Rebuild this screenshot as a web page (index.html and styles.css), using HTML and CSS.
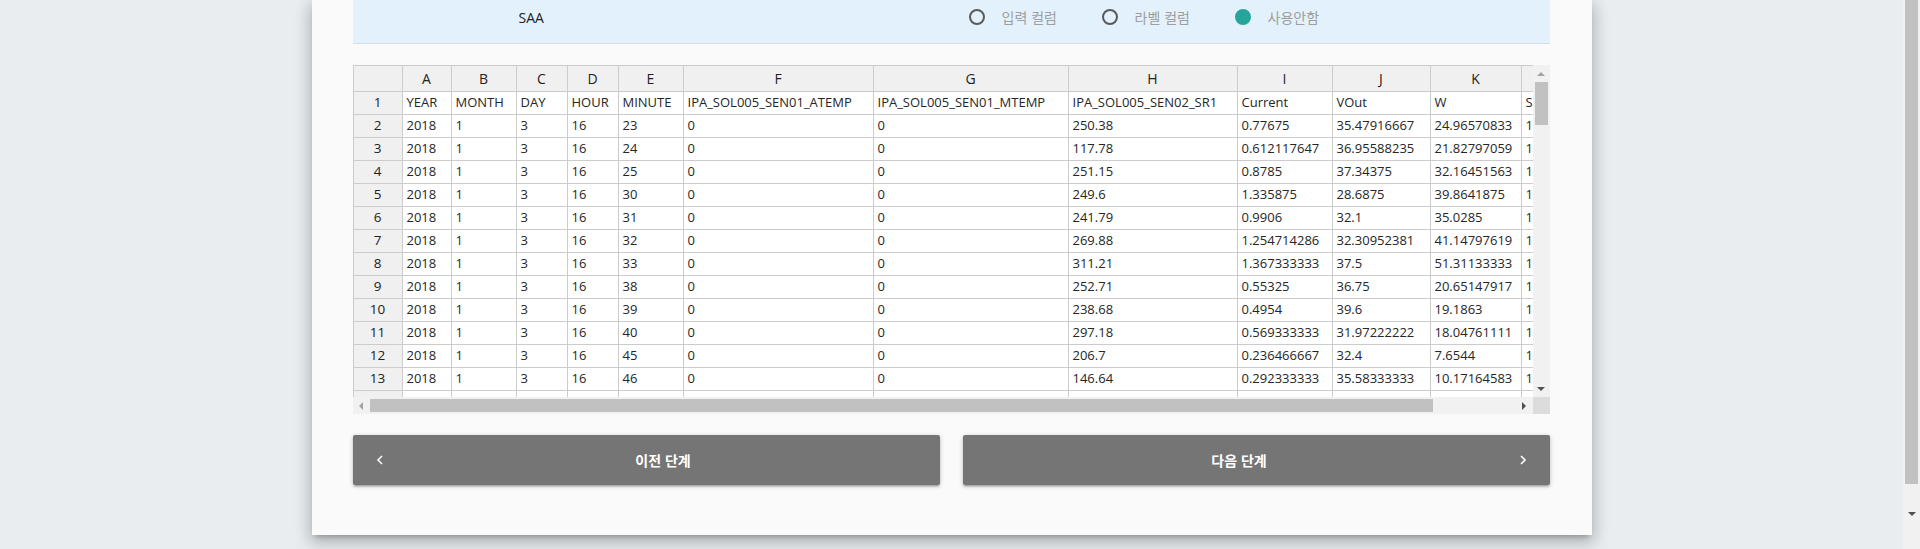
FILE: index.html
```html
<!DOCTYPE html>
<html lang="ko">
<head>
<meta charset="utf-8">
<title>데이터 컬럼 설정</title>
<link rel="stylesheet" href="styles.css">
</head>
<body>
<div class="screen">
  <main class="page">
    <section class="card">
      <div class="col-row">
        <span class="col-name">SAA</span>
        <div class="radios">
          <label class="radio"><span class="dot"></span><span class="radio-label">입력 컬럼</span></label>
          <label class="radio"><span class="dot"></span><span class="radio-label">라벨 컬럼</span></label>
          <label class="radio"><span class="dot checked"></span><span class="radio-label">사용안함</span></label>
        </div>
      </div>

      <div class="grid-frame">
        <div class="viewport">
          <div class="sheet">
            <div class="row head">
              <div class="c h"></div><div class="c h">A</div><div class="c h">B</div><div class="c h">C</div><div class="c h">D</div><div class="c h">E</div><div class="c h">F</div><div class="c h">G</div><div class="c h">H</div><div class="c h">I</div><div class="c h">J</div><div class="c h">K</div><div class="c h">L</div>
            </div>
            <div class="row">
              <div class="c rh">1</div><div class="c">YEAR</div><div class="c">MONTH</div><div class="c">DAY</div><div class="c">HOUR</div><div class="c">MINUTE</div><div class="c">IPA_SOL005_SEN01_ATEMP</div><div class="c">IPA_SOL005_SEN01_MTEMP</div><div class="c">IPA_SOL005_SEN02_SR1</div><div class="c">Current</div><div class="c">VOut</div><div class="c">W</div><div class="c">SR</div>
            </div>
            <div class="row">
              <div class="c rh">2</div><div class="c">2018</div><div class="c">1</div><div class="c">3</div><div class="c">16</div><div class="c">23</div><div class="c">0</div><div class="c">0</div><div class="c">250.38</div><div class="c">0.77675</div><div class="c">35.47916667</div><div class="c">24.96570833</div><div class="c">1</div>
            </div>
            <div class="row">
              <div class="c rh">3</div><div class="c">2018</div><div class="c">1</div><div class="c">3</div><div class="c">16</div><div class="c">24</div><div class="c">0</div><div class="c">0</div><div class="c">117.78</div><div class="c">0.612117647</div><div class="c">36.95588235</div><div class="c">21.82797059</div><div class="c">1</div>
            </div>
            <div class="row">
              <div class="c rh">4</div><div class="c">2018</div><div class="c">1</div><div class="c">3</div><div class="c">16</div><div class="c">25</div><div class="c">0</div><div class="c">0</div><div class="c">251.15</div><div class="c">0.8785</div><div class="c">37.34375</div><div class="c">32.16451563</div><div class="c">1</div>
            </div>
            <div class="row">
              <div class="c rh">5</div><div class="c">2018</div><div class="c">1</div><div class="c">3</div><div class="c">16</div><div class="c">30</div><div class="c">0</div><div class="c">0</div><div class="c">249.6</div><div class="c">1.335875</div><div class="c">28.6875</div><div class="c">39.8641875</div><div class="c">1</div>
            </div>
            <div class="row">
              <div class="c rh">6</div><div class="c">2018</div><div class="c">1</div><div class="c">3</div><div class="c">16</div><div class="c">31</div><div class="c">0</div><div class="c">0</div><div class="c">241.79</div><div class="c">0.9906</div><div class="c">32.1</div><div class="c">35.0285</div><div class="c">1</div>
            </div>
            <div class="row">
              <div class="c rh">7</div><div class="c">2018</div><div class="c">1</div><div class="c">3</div><div class="c">16</div><div class="c">32</div><div class="c">0</div><div class="c">0</div><div class="c">269.88</div><div class="c">1.254714286</div><div class="c">32.30952381</div><div class="c">41.14797619</div><div class="c">1</div>
            </div>
            <div class="row">
              <div class="c rh">8</div><div class="c">2018</div><div class="c">1</div><div class="c">3</div><div class="c">16</div><div class="c">33</div><div class="c">0</div><div class="c">0</div><div class="c">311.21</div><div class="c">1.367333333</div><div class="c">37.5</div><div class="c">51.31133333</div><div class="c">1</div>
            </div>
            <div class="row">
              <div class="c rh">9</div><div class="c">2018</div><div class="c">1</div><div class="c">3</div><div class="c">16</div><div class="c">38</div><div class="c">0</div><div class="c">0</div><div class="c">252.71</div><div class="c">0.55325</div><div class="c">36.75</div><div class="c">20.65147917</div><div class="c">1</div>
            </div>
            <div class="row">
              <div class="c rh">10</div><div class="c">2018</div><div class="c">1</div><div class="c">3</div><div class="c">16</div><div class="c">39</div><div class="c">0</div><div class="c">0</div><div class="c">238.68</div><div class="c">0.4954</div><div class="c">39.6</div><div class="c">19.1863</div><div class="c">1</div>
            </div>
            <div class="row">
              <div class="c rh">11</div><div class="c">2018</div><div class="c">1</div><div class="c">3</div><div class="c">16</div><div class="c">40</div><div class="c">0</div><div class="c">0</div><div class="c">297.18</div><div class="c">0.569333333</div><div class="c">31.97222222</div><div class="c">18.04761111</div><div class="c">1</div>
            </div>
            <div class="row">
              <div class="c rh">12</div><div class="c">2018</div><div class="c">1</div><div class="c">3</div><div class="c">16</div><div class="c">45</div><div class="c">0</div><div class="c">0</div><div class="c">206.7</div><div class="c">0.236466667</div><div class="c">32.4</div><div class="c">7.6544</div><div class="c">1</div>
            </div>
            <div class="row">
              <div class="c rh">13</div><div class="c">2018</div><div class="c">1</div><div class="c">3</div><div class="c">16</div><div class="c">46</div><div class="c">0</div><div class="c">0</div><div class="c">146.64</div><div class="c">0.292333333</div><div class="c">35.58333333</div><div class="c">10.17164583</div><div class="c">1</div>
            </div>
            <div class="row">
              <div class="c rh">14</div><div class="c">2018</div><div class="c">1</div><div class="c">3</div><div class="c">16</div><div class="c">47</div><div class="c">0</div><div class="c">0</div><div class="c">164.58</div><div class="c">0.3838</div><div class="c">35.375</div><div class="c">13.2023</div><div class="c">1</div>
            </div>
          </div>
        </div>
        <div class="vscroll">
          <span class="arrow up dim"></span>
          <span class="vthumb"></span>
          <span class="vspace"></span>
          <span class="arrow down"></span>
          <span class="corner"></span>
        </div>
        <div class="hscroll">
          <span class="arrow left dim"></span>
          <span class="htrack"><span class="hthumb"></span></span>
          <span class="arrow right"></span>
        </div>
      </div>

      <div class="actions">
        <button class="btn prev" type="button">
          <svg class="chev" width="8" height="10" viewBox="0 0 8 10"><path d="M6 1 L2 5 L6 9" fill="none" stroke="#fff" stroke-width="1.6"/></svg>
          <span class="btn-text">이전 단계</span>
        </button>
        <button class="btn next" type="button">
          <span class="btn-text">다음 단계</span>
          <svg class="chev" width="8" height="10" viewBox="0 0 8 10"><path d="M2 1 L6 5 L2 9" fill="none" stroke="#fff" stroke-width="1.6"/></svg>
        </button>
      </div>
    </section>
  </main>
  <div class="page-scroll">
    <span class="page-thumb"></span>
    <span class="page-space"></span>
    <span class="arrow down dark"></span>
  </div>
</div>
</body>
</html>
```

FILE: styles.css
```css
html, body {
  margin: 0;
  height: 549px;
  overflow: hidden;
}

body {
  background: #e9edf0;
  font-family: "Open Sans", "Noto Sans", "Noto Sans CJK KR", sans-serif;
  color: #333;
}

.screen {
  display: flex;
  height: 549px;
}

.page {
  flex: 1;
  display: flex;
  justify-content: center;
  align-items: flex-start;
}

.card {
  width: 1280px;
  box-sizing: border-box;
  padding: 0 42px 50px 41px;
  background: #fafafa;
  box-shadow: 0 8px 17px 2px rgba(0, 0, 0, 0.14), 0 3px 14px 2px rgba(0, 0, 0, 0.12), 0 5px 5px -3px rgba(0, 0, 0, 0.2);
}

/* column setting row */
.col-row {
  display: flex;
  align-items: center;
  height: 44px;
  box-sizing: border-box;
  padding: 0 0 9px 166px;
  background: #e3f1fc;
  border-bottom: 1px solid #d3dee7;
}

.col-name {
  width: 450px;
  font-size: 14px;
  color: #222;
}

.radios {
  display: flex;
  align-items: center;
}

.radio {
  display: flex;
  align-items: center;
  width: 133px;
  font-family: "Noto Sans CJK KR", sans-serif;
  font-size: 14px;
  color: #9e9e9e;
}

.dot {
  width: 16px;
  height: 16px;
  box-sizing: border-box;
  border: 2px solid #5a5a5a;
  border-radius: 50%;
  margin-right: 17px;
}

.dot.checked {
  border-color: #26a69a;
  background: #26a69a;
}

/* spreadsheet */
.grid-frame {
  margin-top: 21px;
  display: grid;
  grid-template-columns: 1180px 17px;
  grid-template-rows: 332px 17px;
}

.viewport {
  overflow: hidden;
}

.sheet {
  display: grid;
  grid-template-columns: 49px 49px 65px 51px 51px 65px 190px 195px 169px 95px 98px 91px 80px;
  grid-template-rows: 26px;
  grid-auto-rows: 23px;
  width: max-content;
  border-left: 1px solid #ccc;
  border-top: 1px solid #ccc;
  background: #fff;
  font-size: 13px;
  color: #262626;
}

.row {
  display: contents;
}

.c {
  box-sizing: border-box;
  border-right: 1px solid #ccc;
  border-bottom: 1px solid #ccc;
  padding: 0 4px;
  line-height: 21px;
  white-space: nowrap;
  overflow: hidden;
}

.c.h {
  background: #f0f0f0;
  text-align: center;
  line-height: 25px;
  font-size: 14px;
  color: #222;
}

.c.rh {
  background: #f0f0f0;
  text-align: center;
  font-size: 13.5px;
  color: #222;
}

/* fake scrollbars */
.vscroll {
  grid-row: 1 / 3;
  grid-column: 2;
  display: flex;
  flex-direction: column;
  background: #f1f1f1;
}

.hscroll {
  grid-row: 2;
  grid-column: 1;
  display: flex;
  background: #f1f1f1;
}

.arrow {
  width: 17px;
  height: 17px;
  flex: none;
  position: relative;
}

.arrow::after {
  content: "";
  position: absolute;
  left: 50%;
  top: 50%;
  width: 0;
  height: 0;
  border: 4px solid transparent;
}

.arrow.up::after {
  border-bottom-color: #505050;
  border-top-width: 0;
  transform: translate(-50%, -50%);
}

.arrow.down::after {
  border-top-color: #505050;
  border-bottom-width: 0;
  transform: translate(-50%, -50%);
}

.arrow.left::after {
  border-right-color: #505050;
  border-left-width: 0;
  transform: translate(-50%, -50%);
}

.arrow.right::after {
  border-left-color: #505050;
  border-right-width: 0;
  transform: translate(-50%, -50%);
}

.arrow.dim.up::after { border-bottom-color: #a3a3a3; }
.arrow.dim.left::after { border-right-color: #a3a3a3; }

.vthumb {
  height: 43px;
  margin: 0 2px;
  background: #c1c1c1;
  flex: none;
}

.vspace {
  flex: 1;
}

.corner {
  height: 17px;
  flex: none;
  background: #dcdcdc;
}

.htrack {
  flex: 1;
  display: flex;
  align-items: center;
}

.hthumb {
  width: 1063px;
  height: 13px;
  background: #c1c1c1;
}

/* buttons */
.actions {
  display: flex;
  gap: 23px;
  margin-top: 21px;
}

.btn {
  flex: 1;
  display: flex;
  align-items: center;
  height: 50px;
  padding: 0 23px;
  border: none;
  border-radius: 2px;
  background: #757575;
  color: #fff;
  font-family: "Noto Sans CJK KR", sans-serif;
  font-size: 14px;
  font-weight: 700;
  box-shadow: 0 2px 2px 0 rgba(0, 0, 0, 0.14), 0 3px 1px -2px rgba(0, 0, 0, 0.12), 0 1px 5px 0 rgba(0, 0, 0, 0.2);
}

.btn-text {
  flex: 1;
  text-align: center;
}

.prev .chev {
  margin-right: 26px;
}

.next .chev {
  margin-left: 26px;
}

/* browser scrollbar */
.page-scroll {
  width: 17px;
  flex: none;
  display: flex;
  flex-direction: column;
  background: #f1f1f1;
}

.page-thumb {
  height: 484px;
  margin: 0 2px;
  background: #c1c1c1;
  flex: none;
}

.page-space {
  flex: 1;
}

.page-scroll .arrow {
  margin-bottom: 27px;
}
```
